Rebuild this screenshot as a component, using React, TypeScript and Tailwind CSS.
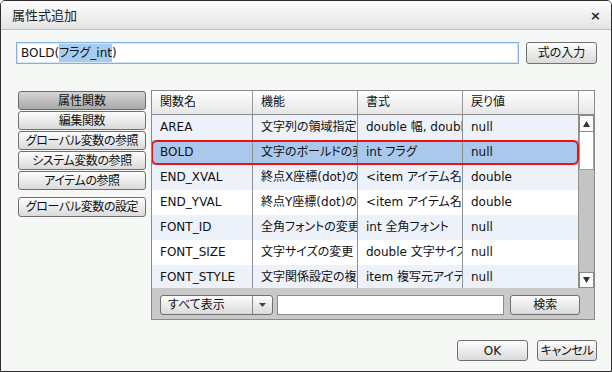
import type { ReactNode } from "react";

const rows: [string, string, string, string][] = [
  ["AREA", "文字列の領域指定の変更", "double 幅, double 高さ", "null"],
  ["BOLD", "文字のボールドの変更", "int フラグ", "null"],
  ["END_XVAL", "終点X座標(dot)の取得", "<item アイテム名>", "double"],
  ["END_YVAL", "終点Y座標(dot)の取得", "<item アイテム名>", "double"],
  ["FONT_ID", "全角フォントの変更", "int 全角フォント", "null"],
  ["FONT_SIZE", "文字サイズの変更", "double 文字サイズ", "null"],
  ["FONT_STYLE", "文字関係設定の複写", "item 複写元アイテム", "null"],
];

const sideButtons = [
  "属性関数",
  "編集関数",
  "グローバル変数の参照",
  "システム変数の参照",
  "アイテムの参照",
];

const btnClass =
  "flex items-center justify-center whitespace-nowrap rounded-[3px] border border-[#707070] bg-linear-to-b from-[#fdfdfd] to-[#dadada] text-[12px] text-[#111]";

const colWidths = ["w-[101px]", "w-[105px]", "w-[105px]", "w-[116px]"];

function Cell({ width, children }: { width: string; children: ReactNode }) {
  return (
    <div
      className={`${width} shrink-0 overflow-hidden whitespace-nowrap border-r border-[#8f8f8f] pl-[8px] leading-[25px]`}
    >
      {children}
    </div>
  );
}

function Arrow({ up }: { up?: boolean }) {
  return (
    <svg width="7" height="6" viewBox="0 0 7 6">
      <path d={up ? "M3.5 0 L7 6 L0 6 Z" : "M0 0 L7 0 L3.5 6 Z"} fill="#333" />
    </svg>
  );
}

export default function App() {
  return (
    <div className="h-[372px] w-[612px] bg-white font-['DejaVu_Sans','Noto_Sans_CJK_JP',sans-serif] text-[12px] text-[#111] [font-feature-settings:'palt']">
      <div className="flex h-[372px] w-[612px] flex-col overflow-hidden rounded-t-[5px] border border-[#2d2d2d] bg-[#f6f8f5]">
        <div className="flex h-[29px] shrink-0 items-center justify-between border-b border-[#bdbdbd] bg-linear-to-b from-[#fdfdfd] to-[#e3e4e3] pl-[11px] pr-[10px]">
          <span className="font-['Noto_Sans_CJK_JP',sans-serif] text-[13px] text-[#222]">
            属性式追加
          </span>
          <span className="text-[13px] font-bold leading-none text-[#222]">×</span>
        </div>

        <div className="flex flex-1 flex-col pl-[15px] pr-[14px]">
          <div className="mt-[12px] flex h-[22px] gap-[7px]">
            <div className="flex flex-1 items-center border border-[#86b1dd] bg-white pl-[4px] shadow-[inset_0_0_0_1px_#d6e6f6]">
              <span>BOLD(</span>
              <span className="bg-[#a6cdf0]">フラグ_int</span>
              <span>)</span>
            </div>
            <button className={`${btnClass} w-[71px]`}>式の入力</button>
          </div>

          <div className="mt-[26px] flex gap-[5px]">
            <div className="ml-[2px] flex w-[128px] flex-col pt-[1px]">
              <div className="flex flex-col gap-[1px]">
                {sideButtons.map((label, i) => (
                  <button
                    key={label}
                    className={
                      i === 0
                        ? "flex h-[19px] items-center justify-center rounded-[3px] border border-[#6a6a6a] bg-linear-to-b from-[#d6d6d6] to-[#a9a9a9] text-[12px] text-[#111]"
                        : `${btnClass} h-[19px] text-[11.5px] tracking-[-0.4px]`
                    }
                  >
                    {label}
                  </button>
                ))}
              </div>
              <button className={`${btnClass} mt-[7px] h-[20px] text-[11.5px] tracking-[-0.4px]`}>
                グローバル変数の設定
              </button>
            </div>

            <div className="flex h-[230px] w-[444px] flex-col border border-[#8a8a8a] bg-[#c9c9c9]">
              <div className="flex h-[24px] shrink-0 border-b border-[#8a8a8a] bg-linear-to-b from-[#ffffff] to-[#e6e6e6]">
                {["関数名", "機能", "書式", "戻り値"].map((h, i) => (
                  <div
                    key={h}
                    className={`${colWidths[i]} shrink-0 border-r border-[#9a9a9a] pl-[8px] leading-[23px]`}
                  >
                    {h}
                  </div>
                ))}
                <div className="w-[15px]" />
              </div>

              <div className="flex h-[173px] shrink-0 overflow-hidden">
                <div className="flex flex-col bg-white">
                  {rows.map((r, i) => (
                    <div
                      key={r[0]}
                      className={`relative flex h-[25px] shrink-0 ${
                        i === 1 ? "bg-[#a9c8ec]" : i % 2 === 0 ? "bg-[#edf2fa]" : "bg-white"
                      }`}
                    >
                      {r.map((c, j) => (
                        <Cell key={j} width={colWidths[j]}>
                          {c}
                        </Cell>
                      ))}
                      {i === 1 && (
                        <div className="pointer-events-none absolute inset-y-0 -left-[1px] right-0 rounded-[6px] border-2 border-[#ee1111]" />
                      )}
                    </div>
                  ))}
                </div>
                <div className="flex w-[15px] shrink-0 flex-col bg-[#c4c4c4]">
                  <div className="flex h-[17px] items-center justify-center border border-[#8a8a8a] bg-[#fbfbfb]">
                    <Arrow up />
                  </div>
                  <div className="h-[38px] border-x border-b border-[#a0a0a0] bg-white" />
                  <div className="flex-1" />
                  <div className="flex h-[16px] items-center justify-center border border-[#8a8a8a] bg-[#fbfbfb]">
                    <Arrow />
                  </div>
                </div>
              </div>

              <div className="flex flex-1 gap-[4px] pl-[8px] pr-[14px] pt-[7px]">
                <div className="flex h-[20px] w-[114px] rounded-[3px] border border-[#707070] bg-linear-to-b from-[#fdfdfd] to-[#dadada]">
                  <div className="flex-1 pl-[7px] leading-[18px]">すべて表示</div>
                  <div className="flex w-[20px] items-center justify-center border-l border-[#8a8a8a]">
                    <svg width="7" height="4" viewBox="0 0 7 4">
                      <path d="M0 0 L7 0 L3.5 4 Z" fill="#444" />
                    </svg>
                  </div>
                </div>
                <div className="h-[20px] w-[228px] border border-[#8a8a8a] bg-white" />
                <button className={`${btnClass} ml-[2px] h-[20px] w-[70px]`}>検索</button>
              </div>
            </div>
          </div>

          <div className="mt-[20px] flex justify-end gap-[9px]">
            <button className={`${btnClass} h-[21px] w-[71px]`}>OK</button>
            <button className={`${btnClass} h-[21px] w-[60px] tracking-[-0.3px]`}>キャンセル</button>
          </div>
        </div>
      </div>
    </div>
  );
}
